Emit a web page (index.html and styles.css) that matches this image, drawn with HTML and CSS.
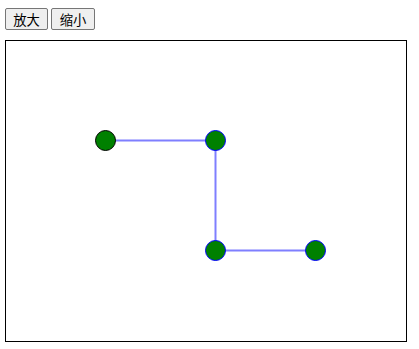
FILE: index.html
```html
<!DOCTYPE html>
<html lang="zh-CN">
<head>
    <meta charset="UTF-8">
    <meta name="viewport" content="width=device-width, initial-scale=1.0">
    <title>缩放</title>
    <link rel="stylesheet" href="styles.css">
</head>
<body>

    <div class="toolbar">
        <button>放大</button>
        <button>缩小</button>
    </div>

    <div class="stage">
        <svg width="400" height="300" viewBox="0 0 400 300">
            <g class="edges">
                <line x1="99.5" y1="99.5" x2="209.5" y2="99.5"></line>
                <line x1="209.5" y1="99.5" x2="209.5" y2="209.5"></line>
                <line x1="209.5" y1="209.5" x2="309.5" y2="209.5"></line>
            </g>
            <g class="nodes">
                <circle class="root" cx="99.5" cy="99.5" r="10"></circle>
                <circle cx="209.5" cy="99.5" r="10"></circle>
                <circle cx="209.5" cy="209.5" r="10"></circle>
                <circle cx="309.5" cy="209.5" r="10"></circle>
            </g>
        </svg>
    </div>

</body>
</html>
```

FILE: styles.css
```css
body {
    margin: 8px 5px;
    font-family: "Noto Sans CJK SC", sans-serif;
}

.toolbar {
    display: flex;
    gap: 3px;
    margin-bottom: 10px;
}

.toolbar button {
    font-family: "Noto Sans CJK SC", sans-serif;
    font-size: 13.33px;
    width: 43px;
    height: 22px;
    padding: 0;
    color: #000;
    background-color: #efefef;
    border: 1px solid #767676;
    border-radius: 2px;
}

.toolbar button + button {
    width: 44px;
}

.stage {
    width: 400px;
    height: 300px;
    border: 1px solid #000;
}

.stage svg {
    display: block;
}

.edges line {
    stroke: #7f7fff;
    stroke-width: 2;
}

.nodes circle {
    fill: #008000;
    stroke: #0000ff;
    stroke-width: 1;
}

.nodes circle.root {
    stroke: #000;
}
```
